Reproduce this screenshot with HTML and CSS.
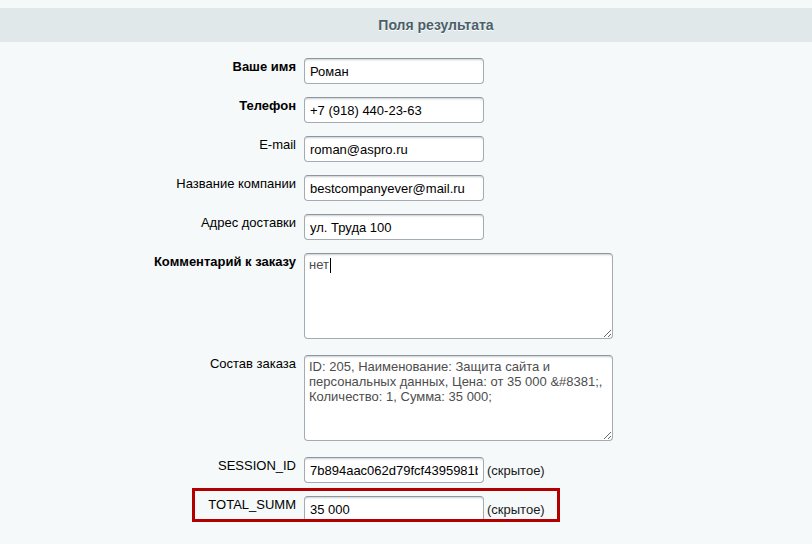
FILE: index.html
```html
<!DOCTYPE html>
<html lang="ru">
<head>
    <meta charset="UTF-8"/>
    <title>Поля результата</title>
    <link rel="stylesheet" href="styles.css">
</head>
<body>
<div class="page">
    <div class="heading">Поля результата</div>

    <div class="fields">
        <label class="label bold">Ваше имя</label>
        <div class="field"><input type="text" value="Роман"></div>

        <label class="label bold">Телефон</label>
        <div class="field"><input type="text" value="+7 (918) 440-23-63"></div>

        <label class="label">E-mail</label>
        <div class="field"><input type="text" value="roman@aspro.ru"></div>

        <label class="label">Название компании</label>
        <div class="field"><input type="text" value="bestcompanyever@mail.ru"></div>

        <label class="label">Адрес доставки</label>
        <div class="field"><input type="text" value="ул. Труда 100"></div>

        <label class="label bold">Комментарий к заказу</label>
        <div class="field caret-wrap"><textarea>нет</textarea><span class="caret"></span></div>

        <label class="label">Состав заказа</label>
        <div class="field"><textarea>ID: 205, Наименование: Защита сайта и персональных данных, Цена: от 35 000 &amp;#8381;, Количество: 1, Сумма: 35 000;</textarea></div>

        <label class="label">SESSION_ID</label>
        <div class="field"><input type="text" value="7b894aac062d79fcf4395981b1a5e7d2"><span class="note">(скрытое)</span></div>

        <label class="label">TOTAL_SUMM</label>
        <div class="field marked"><input type="text" value="35 000"><span class="note">(скрытое)</span></div>
    </div>
</div>
</body>
</html>
```

FILE: styles.css
```css
*, *::before, *::after {
    margin: 0;
    padding: 0;
    box-sizing: border-box;
}

body {
    background: #f5f9f9;
    font-family: "Liberation Sans", Arial, sans-serif;
    font-size: 13px;
    color: #000;
}

.page {
    padding-top: 8px;
    padding-bottom: 30px;
}

.heading {
    height: 34px;
    line-height: 34px;
    background: #e0e8ea;
    padding-left: 60px;
    text-align: center;
    font-size: 14px;
    font-weight: bold;
    color: #4b5e69;
    text-shadow: 0 1px #fff;
}

.fields {
    display: grid;
    grid-template-columns: 296px 1fr;
    column-gap: 8px;
    row-gap: 13px;
    padding-top: 16px;
}

.label {
    text-align: right;
    line-height: 15px;
    padding-top: 1px;
}

.label.bold {
    font-weight: bold;
}

.field {
    display: flex;
    align-items: center;
    align-self: start;
}

.field input {
    width: 180px;
    height: 26px;
    padding: 0 5px;
    border: 1px solid #a3abb5;
    border-top-color: #8d96a1;
    border-radius: 4px;
    background: #fff;
    box-shadow: inset 0 2px 2px -1px rgba(180, 188, 191, 0.7);
    font-family: inherit;
    font-size: 13px;
    color: #000;
    outline: none;
}

.field textarea {
    width: 309px;
    height: 86px;
    padding: 3px 4px;
    border: 1px solid #a3abb5;
    border-top-color: #8d96a1;
    border-radius: 4px;
    background: #fff;
    box-shadow: inset 0 2px 2px -1px rgba(180, 188, 191, 0.7);
    font-family: inherit;
    font-size: 13px;
    line-height: 15px;
    color: #4d4d4d;
    outline: none;
    margin-bottom: 3px;
}

.caret-wrap {
    position: relative;
}

.caret {
    position: absolute;
    left: 26px;
    top: 5px;
    width: 1px;
    height: 15px;
    background: #000;
}

.note {
    margin-left: 3px;
    color: #1a1a1a;
}

/* красная рамка-пометка вокруг строки TOTAL_SUMM */
.marked {
    position: relative;
}

.marked::after {
    content: "";
    position: absolute;
    left: -112px;
    top: -8px;
    width: 368px;
    height: 34px;
    border: 3px solid #b20000;
    pointer-events: none;
}
```
